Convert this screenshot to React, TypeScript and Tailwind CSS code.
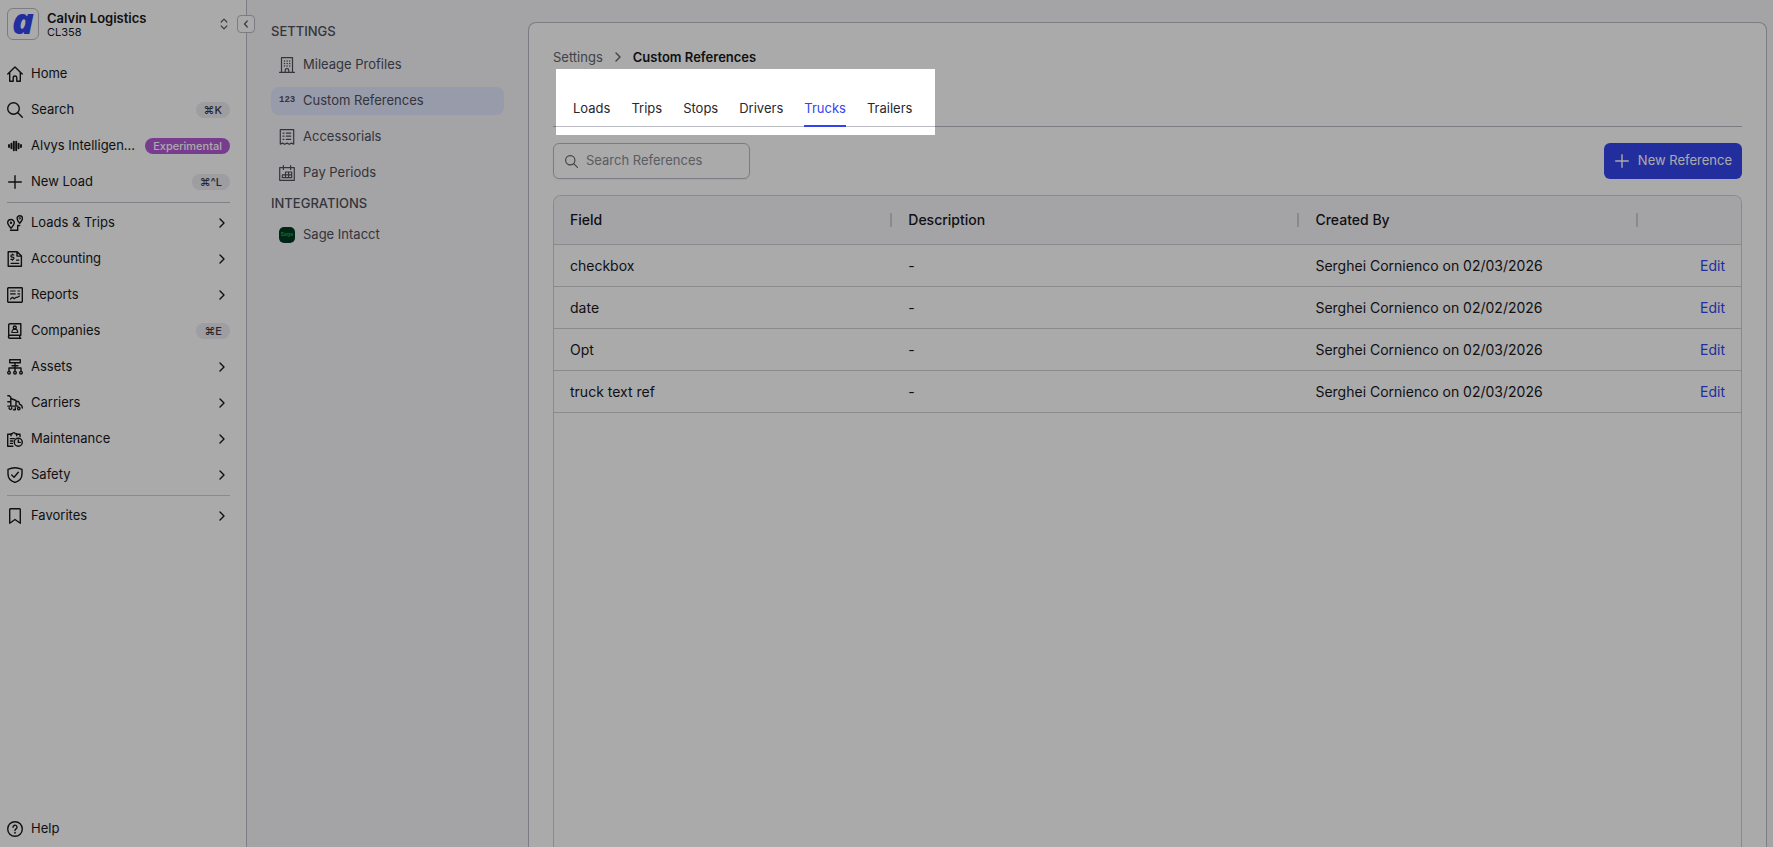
import type { ReactNode } from 'react';
import { clsx } from 'clsx';

type IconProps = { children: ReactNode; className?: string; size?: number };

function Icon({ children, className, size = 16 }: IconProps) {
  return (
    <svg
      viewBox="0 0 16 16"
      width={size}
      height={size}
      fill="none"
      stroke="currentColor"
      strokeWidth="1.4"
      strokeLinecap="round"
      strokeLinejoin="round"
      aria-hidden="true"
      className={clsx('shrink-0', className)}
    >
      {children}
    </svg>
  );
}

const icons = {
  home: (
    <Icon>
      <path d="M.8 8 8 .9 15.2 8M2.7 6.5v8.7h3.5v-3.4a1.8 1.8 0 0 1 3.6 0v3.4h3.5V6.5" />
    </Icon>
  ),
  search: (
    <Icon>
      <circle cx="6.5" cy="6.5" r="5.8" />
      <path d="m10.8 10.8 4.5 4.5" />
    </Icon>
  ),
  wave: (
    <Icon>
      <path strokeWidth="1.9" d="M2 7v2M4.4 5.7v4.6M6.8 3.8v8.4M9.2 3.8v8.4M11.6 5.7v4.6M14 7v2" />
    </Icon>
  ),
  plus: (
    <Icon>
      <path d="M8 1.7v12.6M1.7 8h12.6" />
    </Icon>
  ),
  route: (
    <Icon>
      <path d="M4 13.4C2 10.9.7 9.4.7 7.8a3.3 3.3 0 0 1 6.6 0c0 1.6-1.3 3.1-3.3 5.6Z" />
      <circle cx="4" cy="7.8" r=".5" />
      <path d="M12.7 8.3c-1.7-2.1-2.6-3.4-2.6-4.9a2.7 2.7 0 0 1 5.4 0c0 1.5-1 2.8-2.8 4.9Z" />
      <circle cx="12.8" cy="3.4" r=".4" />
      <path d="M12.7 10.5h-2v4.8H3.5" />
    </Icon>
  ),
  invoice: (
    <Icon>
      <path d="M1.2.7h9l4.2 4.2v10.4H1.2zM10 .9v4.2h4.2" />
      <path strokeWidth="1.2" d="M6.8 3.9H5a1.1 1.1 0 0 0 0 2.2h.8a1.1 1.1 0 0 1 0 2.2H3.9M5.4 3v.9M5.4 8.3v.9M9.5 9.2h2.3M4 12.3h7.8" />
    </Icon>
  ),
  report: (
    <Icon>
      <rect x=".7" y=".7" width="14.6" height="14.6" rx=".7" />
      <path strokeWidth="1.2" d="M3.6 4h4.6M3.6 6.9h4.6M11 4h1.6M11 6.9h1.6M3.5 12l2-1.7 1.7 1.5 2-1.5h1.3l2-1.2" />
    </Icon>
  ),
  company: (
    <Icon>
      <path d="M1.7 13.6V2A1.3 1.3 0 0 1 3 .7h10.8v11.5H3a1.4 1.4 0 0 0 0 3.1h10.8M12.7 12.4v2.6" />
      <circle cx="7.8" cy="4.5" r="1.5" />
      <path strokeWidth="1.2" d="M4.9 9.5V9a2.9 2.9 0 0 1 5.8 0v.5z" />
    </Icon>
  ),
  assets: (
    <Icon>
      <rect x="2.7" y=".8" width="10.6" height="3" />
      <path d="M8 3.9v8M5 6.8h6M2 11.8V9h12v2.8" />
      <circle cx="2" cy="13.7" r="1.3" />
      <circle cx="8" cy="13.7" r="1.3" />
      <circle cx="14" cy="13.7" r="1.3" />
    </Icon>
  ),
  carrier: (
    <Icon>
      <path d="M.8.8h1.5l1.5 1.5v8.8M3.8 3.5 9 5.5v5.6M.8 6.8h3M.8 11.1H11M9 6.5h2.6l1.2 2.9c1.5.3 2.5 1 2.5 3.6M4.800 12.7a1.4 1.4 0 1 1-2.7 0" />
      <path d="M6.5 14.7h1.8v-2" />
      <circle cx="11.8" cy="13.5" r="1.2" />
    </Icon>
  ),
  maintenance: (
    <Icon>
      <path d="M5.9 15.3H.7V3.2H4M9.6 3.2H13v2.4M4 4.7V2.8h1.3a1.6 1.6 0 0 1 3.1 0h1.3v1.9M3.4 7.6h4M3.4 10h2.5M3.4 12.4h2" />
      <circle cx="11.3" cy="11.3" r="4" />
      <path d="M11.3 9v2.4h2" />
    </Icon>
  ),
  shield: (
    <Icon>
      <path d="M1 2.3C3.4 1.2 5.5.7 8 .7s4.6.5 7 1.6V7c0 4.2-2.6 7-7 8.4C3.6 14 1 11.2 1 7z" />
      <path d="m4.7 8 2.4 2.2 4.2-5" />
    </Icon>
  ),
  bookmark: (
    <Icon>
      <path d="M2.7 1.5c0-.5.3-.8.8-.8h9c.5 0 .8.3.8.8v13.7L8 11.5l-5.3 3.7z" />
    </Icon>
  ),
  help: (
    <Icon>
      <circle cx="8" cy="8" r="7.3" />
      <path d="M6 6.2a2 2 0 1 1 3 1.7c-.7.4-1 .7-1 1.5" />
      <circle cx="8" cy="11.8" r=".3" />
    </Icon>
  ),
  building: (
    <Icon>
      <path strokeWidth="1.2" d="M.6 15.4h14.8M2.5 15.4V.7h11v14.7M6.2 15.2v-1.7a1.8 1.8 0 0 1 3.6 0v1.7" />
      <path strokeWidth="1.4" strokeDasharray=".1 2.5" d="M5.5 4h5.4M5.5 6.5h5.4M5.5 9h5.4" />
    </Icon>
  ),
  receipt: (
    <Icon>
      <path strokeWidth="1.2" d="M1.3.7h13.4v14.4l-2.2-1-2.2 1.2L8 14.1l-2.3 1.2-2.2-1.2-2.2 1z" />
      <path strokeWidth="1.2" d="M4 4.2h1M7.3 4.2h4.4M4 7.2h1M7.3 7.2h4.4M4 10.3h1M7.3 10.3h4.4" />
    </Icon>
  ),
  calendar: (
    <Icon>
      <path strokeWidth="1.2" d="M.7 2.7h14.6v12.6H.7zM4.4.6v3.8M11.6.6v3.8M3.3 12.7V9.8h3.2V7h6.2v5.7zM3.3 9.8h9.4M6.5 9.8v2.9M9.6 7v5.7" />
    </Icon>
  ),
};

function ChevronRight({ className }: { className?: string }) {
  return (
    <Icon className={className}>
      <path d="m6 4 4 4-4 4" />
    </Icon>
  );
}

type NavEntry = { icon: ReactNode; label: string; shortcut?: string; badge?: string; expandable?: boolean };

const mainNav: NavEntry[] = [
  { icon: icons.home, label: 'Home' },
  { icon: icons.search, label: 'Search', shortcut: '⌘K' },
  { icon: icons.wave, label: 'Alvys Intelligen...', badge: 'Experimental' },
  { icon: icons.plus, label: 'New Load', shortcut: '⌘^L' },
];

const moduleNav: NavEntry[] = [
  { icon: icons.route, label: 'Loads & Trips', expandable: true },
  { icon: icons.invoice, label: 'Accounting', expandable: true },
  { icon: icons.report, label: 'Reports', expandable: true },
  { icon: icons.company, label: 'Companies', shortcut: '⌘E' },
  { icon: icons.assets, label: 'Assets', expandable: true },
  { icon: icons.carrier, label: 'Carriers', expandable: true },
  { icon: icons.maintenance, label: 'Maintenance', expandable: true },
  { icon: icons.shield, label: 'Safety', expandable: true },
];

const settingsNav = [
  { icon: icons.building, label: 'Mileage Profiles' },
  {
    icon: <span className="w-4 font-['Liberation_Mono',monospace] text-[9px] font-bold">123</span>,
    label: 'Custom References',
    active: true,
  },
  { icon: icons.receipt, label: 'Accessorials' },
  { icon: icons.calendar, label: 'Pay Periods' },
];

const integrations = [
  {
    icon: (
      <span className="flex size-4 items-center justify-center rounded-[5px] bg-[#003822] text-[5px] font-bold text-[#00b030]">
        Sage
      </span>
    ),
    label: 'Sage Intacct',
  },
];

const tabs = ['Loads', 'Trips', 'Stops', 'Drivers', 'Trucks', 'Trailers'];

const references = [
  { field: 'checkbox', description: '-', createdBy: 'Serghei Cornienco on 02/03/2026' },
  { field: 'date', description: '-', createdBy: 'Serghei Cornienco on 02/02/2026' },
  { field: 'Opt', description: '-', createdBy: 'Serghei Cornienco on 02/03/2026' },
  { field: 'truck text ref', description: '-', createdBy: 'Serghei Cornienco on 02/03/2026' },
];

function NavItem({ icon, label, shortcut, badge, expandable }: NavEntry) {
  return (
    <a href="#" className="flex h-9 items-center gap-2">
      {icon}
      <span className="flex-1 whitespace-nowrap">{label}</span>
      {shortcut && (
        <kbd className="rounded-full bg-[#ececf3] px-2 font-[Inter,sans-serif] text-[11px] leading-4 font-medium text-[#3b3b45]">
          {shortcut}
        </kbd>
      )}
      {badge && (
        <span className="rounded-full bg-[#b45bd6] px-2 text-[11px] leading-4 font-medium text-white">{badge}</span>
      )}
      {expandable && <ChevronRight />}
    </a>
  );
}

function Sidebar() {
  return (
    <aside className="relative flex w-[247px] shrink-0 flex-col border-r border-[#bbbbc4] bg-white pr-4 pl-[7px] text-[13px] text-[#18181c]">
      <button type="button" className="mt-2 flex h-8 items-center gap-2 text-left">
        <span className="flex size-8 items-center justify-center rounded-md border border-[#bbbbc4] pb-1.5 font-['Open_Sans',sans-serif] text-[36px] leading-6 font-extrabold text-[#3344ee] italic">
          a
        </span>
        <span className="flex-1">
          <span className="block leading-4 font-semibold">Calvin Logistics</span>
          <span className="block text-[11px] leading-3">CL358</span>
        </span>
        <Icon className="-mr-0.5 text-[#5a5a64]">
          <path strokeWidth="1.2" d="m5.2 6 2.8-2.8L10.800 6M5.200 10 8 12.800l2.800-2.800" />
        </Icon>
      </button>
      <button
        type="button"
        aria-label="Collapse sidebar"
        className="absolute top-[15px] -right-[9px] flex size-[18px] items-center justify-center rounded border border-[#bbbbc4] bg-white text-[#5a5a64]"
      >
        <Icon>
          <path strokeWidth="1.2" d="M9.3 5 6.5 8l2.8 3" />
        </Icon>
      </button>

      <nav className="mt-4">
        {mainNav.map((item) => (
          <NavItem key={item.label} {...item} />
        ))}
        <hr className="mt-0.5 mb-0.5 border-[#c0c0ca]" />
        {moduleNav.map((item) => (
          <NavItem key={item.label} {...item} />
        ))}
        <hr className="mt-0.5 mb-0.5 border-[#d0d0d4]" />
        <NavItem icon={icons.bookmark} label="Favorites" expandable />
      </nav>
      <div className="mt-auto">
        <NavItem icon={icons.help} label="Help" />
      </div>
    </aside>
  );
}

function SettingsLink({ icon, label, active }: { icon: ReactNode; label: string; active?: boolean }) {
  return (
    <a
      href="#"
      className={clsx('flex h-7 items-center gap-2 rounded-lg px-2', active && 'bg-[#e4eaff]')}
    >
      {icon}
      {label}
    </a>
  );
}

function SettingsNav() {
  return (
    <nav className="flex w-[281px] shrink-0 flex-col gap-2 pt-[21px] pr-6 pl-6 text-[13px] text-[#4f4f59]">
      <h2 className="mb-0.5 leading-5 font-medium">SETTINGS</h2>
      {settingsNav.map((item) => (
        <SettingsLink key={item.label} {...item} />
      ))}
      <h2 className="-mt-0.5 leading-5 font-medium">INTEGRATIONS</h2>
      {integrations.map((item) => (
        <SettingsLink key={item.label} {...item} />
      ))}
    </nav>
  );
}

function Tabs() {
  return (
    <div className="relative mt-7 border-b border-[#bbbbc4] pl-5">
      {/* Guided tour spotlight, dims everything else on the page */}
      <div className="pointer-events-none absolute -top-[26px] -bottom-[9px] left-[3px] z-10 w-[379px] shadow-[0_0_0_3000px_rgba(0,0,0,0.333)]" />
      <div role="tablist" className="-mb-px flex gap-[21px] pt-[5px] text-[13px]">
        {tabs.map((tab) => (
          <button
            key={tab}
            type="button"
            role="tab"
            aria-selected={tab === 'Trucks'}
            className={clsx(
              'border-b-2 pb-[9px] leading-4',
              tab === 'Trucks' ? 'border-[#3344ee] text-[#3344ee]' : 'border-transparent text-[#27272f]',
            )}
          >
            {tab}
          </button>
        ))}
      </div>
    </div>
  );
}

function ReferencesTable() {
  return (
    <div className="mt-4 flex-1 overflow-hidden rounded-t-lg border border-b-0 border-[#d0d0d4]">
      <table className="w-full table-fixed text-left text-[14px] text-[#18181c]">
        <colgroup>
          <col className="w-[28.5%]" />
          <col className="w-[34.3%]" />
          <col className="w-[28.5%]" />
          <col />
        </colgroup>
        <thead className="bg-[#f6f6fa]">
          <tr className="h-12 border-b border-[#d0d0d4]">
            {['Field', 'Description', 'Created By'].map((name) => (
              <th key={name} scope="col" className="pl-4 font-medium">
                <span className="flex items-center justify-between">
                  {name}
                  <span className="h-3.5 w-0.5 bg-[#d0d0d4]" />
                </span>
              </th>
            ))}
            <th scope="col" aria-label="Actions" />
          </tr>
        </thead>
        <tbody>
          {references.map((ref) => (
            <tr key={ref.field} className="h-[42px] border-b border-[#d0d0d4]">
              <td className="px-4">{ref.field}</td>
              <td className="px-4">{ref.description}</td>
              <td className="px-4">{ref.createdBy}</td>
              <td className="px-4 text-right">
                <button type="button" className="text-[#3344ee]">
                  Edit
                </button>
              </td>
            </tr>
          ))}
        </tbody>
      </table>
    </div>
  );
}

export default function App() {
  return (
    <div className="flex h-screen overflow-hidden bg-[#f6f6fa] font-[Inter,sans-serif]">
      <Sidebar />
      <SettingsNav />
      <main className="mt-[22px] mr-1.5 flex min-w-0 flex-1 flex-col rounded-t-lg border border-b-0 border-[#bbbbc4] bg-white px-6 pt-6">
        <div className="flex items-center gap-[7px] text-[13px] leading-5">
          <a href="#" className="text-[#62626c]">
            Settings
          </a>
          <ChevronRight className="text-[#62626c]" />
          <span className="font-semibold text-[#18181c]">Custom References</span>
        </div>
        <Tabs />
        <div className="mt-4 flex items-center justify-between">
          <label className="flex h-9 w-[197px] items-center gap-2 rounded-md border border-[#bbbbc4] px-[11px] text-[#62626c] shadow-xs">
            <Icon size={13}>
              <circle cx="6.5" cy="6.5" r="5.7" />
              <path d="m10.7 10.7 4.6 4.6" />
            </Icon>
            <input
              type="text"
              aria-label="Search References"
              placeholder="Search References"
              className="w-full min-w-0 text-[13px] outline-none placeholder:text-[#8a8a94]"
            />
          </label>
          <button
            type="button"
            className="flex h-9 items-center gap-2 rounded-md bg-[#3344ee] px-2.5 text-[13px] text-white"
          >
            {icons.plus}
            New Reference
          </button>
        </div>
        <ReferencesTable />
      </main>
    </div>
  );
}
